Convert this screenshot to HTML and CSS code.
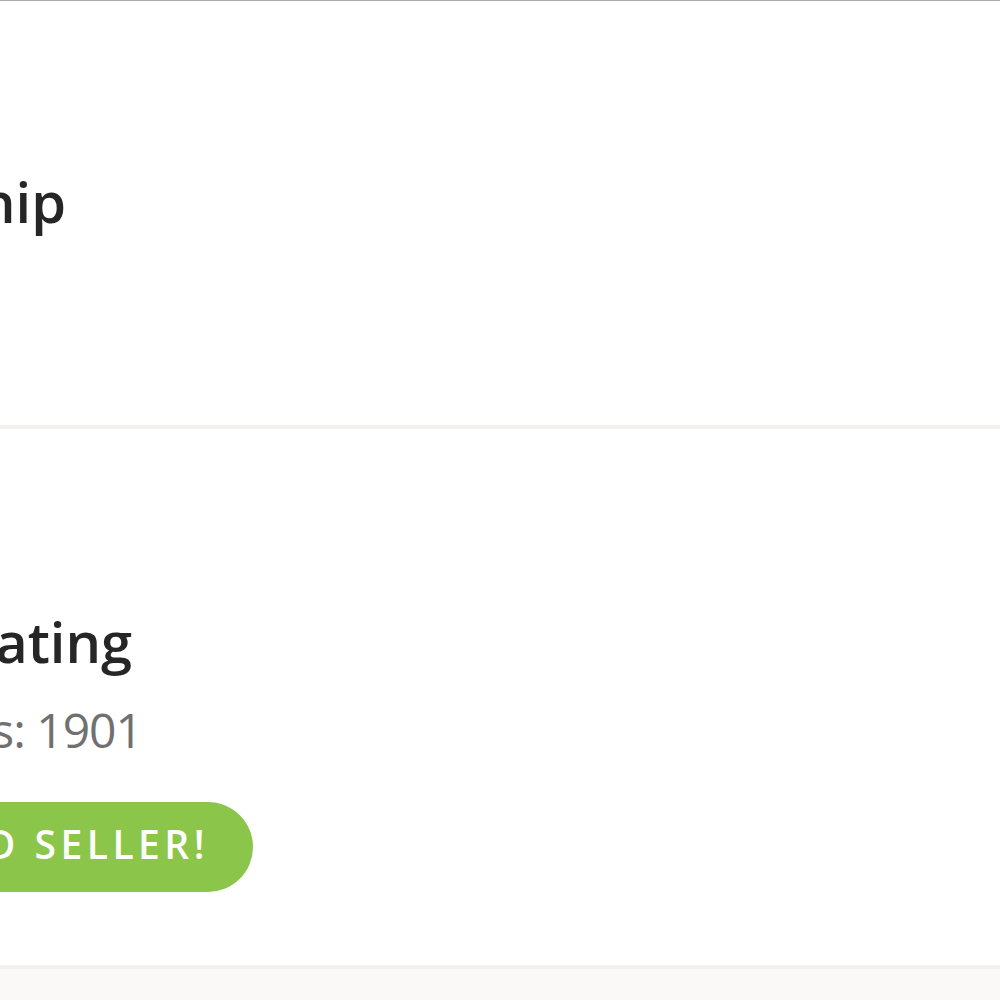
FILE: index.html
```html
<!DOCTYPE html>
<html>
<head>
<meta charset="utf-8">
<link rel="stylesheet" href="styles.css">
</head>
<body>
<div class="page">
  <section class="card card-top">
    <div class="line line-title"><h2 class="title">Membership</h2></div>
  </section>
  <section class="card card-rating">
    <div class="line line-rating"><h2 class="title">Seller Rating</h2></div>
    <div class="line line-reviews"><p class="sub">Reviews: 1901</p></div>
    <div class="line line-badge"><span class="badge">VERIFIED SELLER!</span></div>
  </section>
  <div class="footer-bg"></div>
</div>
</body>
</html>
```
FILE: styles.css
```css
html, body {
  margin: 0;
  padding: 0;
  background: #ffffff;
}
body {
  font-family: "Open Sans", "Lato", sans-serif;
  font-variant-ligatures: none;
  overflow: hidden;
}
.page {
  width: 1000px;
  height: 1000px;
  display: flex;
  flex-direction: column;
  border-top: 1px solid #a9a9a9;
  box-sizing: border-box;
}
.card {
  background: #ffffff;
  display: flex;
  flex-direction: column;
  box-sizing: border-box;
}
.card-top {
  height: 428px;
  padding-top: 170px;
  border-bottom: 4px solid #f4f1ed;
}
.card-rating {
  height: 540px;
  padding-top: 182px;
  border-bottom: 4px solid #f3f1ec;
}
.line {
  display: flex;
  justify-content: flex-end;
  white-space: nowrap;
}
.line-title { width: 66px; }
.line-rating { width: 132px; }
.line-reviews { width: 142px; margin-top: 29px; }
.line-badge { width: 253px; margin-top: 42px; }
.title {
  margin: 0;
  font-size: 56px;
  line-height: 60px;
  font-weight: 600;
  color: #262626;
}
.sub {
  margin: 0;
  font-size: 48px;
  line-height: 60px;
  font-weight: 400;
  letter-spacing: -1px;
  color: #707070;
}
.badge {
  display: inline-flex;
  align-items: center;
  height: 90px;
  padding: 0 44px 8px 40px;
  box-sizing: border-box;
  border-radius: 45px;
  background: #8bc54a;
  color: #ffffff;
  font-size: 39px;
  font-weight: 600;
  letter-spacing: 4.5px;
}
.footer-bg {
  flex: 1;
  background: #faf9f8;
}
```
